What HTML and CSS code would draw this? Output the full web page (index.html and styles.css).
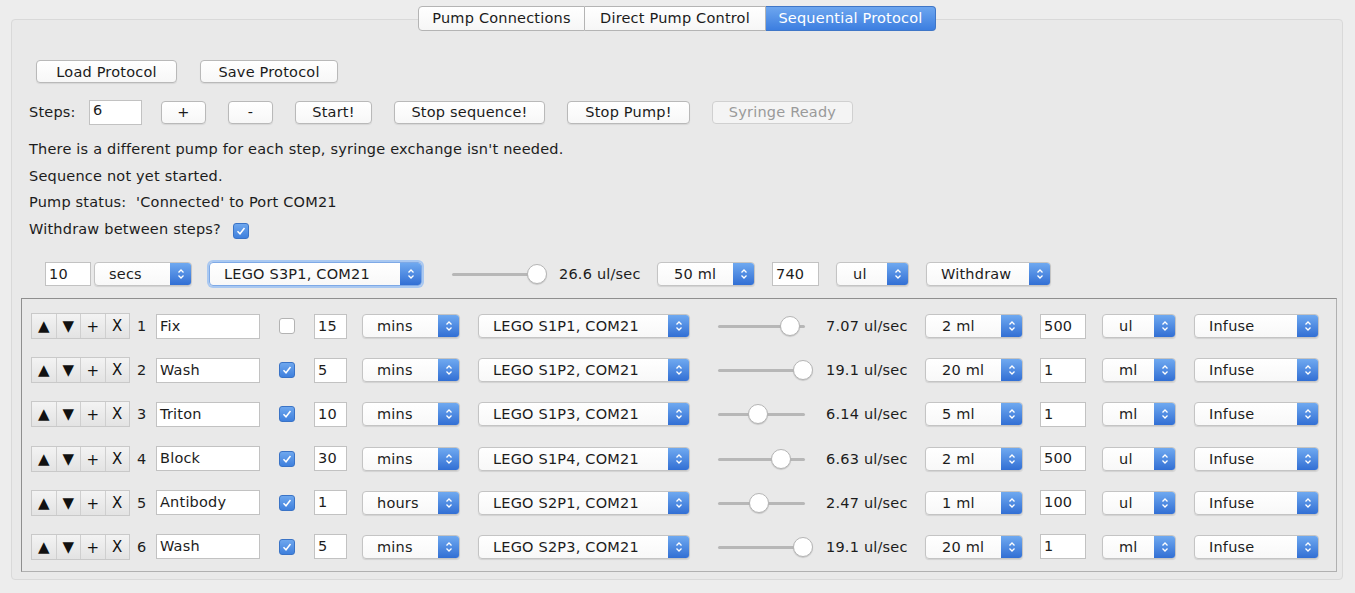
FILE: index.html
```html
<!DOCTYPE html>
<html>
<head>
<meta charset="utf-8">
<link rel="stylesheet" href="styles.css">
</head>
<body>
<div class="window">
  <div class="tabbar">
    <div class="tab first">Pump Connections</div>
    <div class="tab">Direct Pump Control</div>
    <div class="tab active last">Sequential Protocol</div>
  </div>
  <div class="panel">
    <div class="row load-row">
      <button class="btn w-load">Load Protocol</button>
      <button class="btn w-save">Save Protocol</button>
    </div>
    <div class="row steps-row">
      <span class="lbl steps-lbl">Steps:</span>
      <div class="field steps-field">6</div>
      <button class="btn w-pm">+</button>
      <button class="btn w-pm">-</button>
      <button class="btn w-start">Start!</button>
      <button class="btn w-stopseq">Stop sequence!</button>
      <button class="btn w-stoppump">Stop Pump!</button>
      <button class="btn w-syr disabled">Syringe Ready</button>
    </div>
    <div class="text-line">There is a different pump for each step, syringe exchange isn't needed.</div>
    <div class="text-line">Sequence not yet started.</div>
    <div class="text-line">Pump status:&nbsp;&nbsp;'Connected' to Port COM21</div>
    <div class="text-line withdraw-line">Withdraw between steps? <span class="chk on"><svg viewBox="0 0 16 16"><path d="M4.5 8.3 L7 10.8 L11.5 5" fill="none" stroke="#fff" stroke-width="1.5"/></svg></span></div>

    <div class="row config-row">
      <div class="field w-cfg-num">10</div>
      <div class="select w-secs"><span class="sel-text">secs</span><span class="arrow"><svg viewBox="0 0 10 16"><path d="M2.5 6.5 L5 4 L7.5 6.5 M2.5 9.5 L5 12 L7.5 9.5" fill="none" stroke="#fff" stroke-width="1.3"/></svg></span></div>
      <div class="select w-cfg-pump focused"><span class="sel-text">LEGO S3P1, COM21</span><span class="arrow"><svg viewBox="0 0 10 16"><path d="M2.5 6.5 L5 4 L7.5 6.5 M2.5 9.5 L5 12 L7.5 9.5" fill="none" stroke="#fff" stroke-width="1.3"/></svg></span></div>
      <div class="slider w-cfg-slider"><span class="track"></span><span class="knob" style="left:75px"></span></div>
      <span class="rate cfg-rate">26.6 ul/sec</span>
      <div class="select w-ml"><span class="sel-text">50 ml</span><span class="arrow"><svg viewBox="0 0 10 16"><path d="M2.5 6.5 L5 4 L7.5 6.5 M2.5 9.5 L5 12 L7.5 9.5" fill="none" stroke="#fff" stroke-width="1.3"/></svg></span></div>
      <div class="field w-cfg-val">740</div>
      <div class="select w-unit"><span class="sel-text">ul</span><span class="arrow"><svg viewBox="0 0 10 16"><path d="M2.5 6.5 L5 4 L7.5 6.5 M2.5 9.5 L5 12 L7.5 9.5" fill="none" stroke="#fff" stroke-width="1.3"/></svg></span></div>
      <div class="select w-dir cfg-dir"><span class="sel-text">Withdraw</span><span class="arrow"><svg viewBox="0 0 10 16"><path d="M2.5 6.5 L5 4 L7.5 6.5 M2.5 9.5 L5 12 L7.5 9.5" fill="none" stroke="#fff" stroke-width="1.3"/></svg></span></div>
    </div>

    <div class="table" id="table"></div>
  </div>
</div>
<script src="app.js"></script>
</body>
</html>
```

FILE: app.js
```js
var rows = [
  [1, "Fix", false, "15", "mins", "LEGO S1P1, COM21", 62, "7.07 ul/sec", "2 ml", "500", "ul", "Infuse"],
  [2, "Wash", true, "5", "mins", "LEGO S1P2, COM21", 75, "19.1 ul/sec", "20 ml", "1", "ml", "Infuse"],
  [3, "Triton", true, "10", "mins", "LEGO S1P3, COM21", 30, "6.14 ul/sec", "5 ml", "1", "ml", "Infuse"],
  [4, "Block", true, "30", "mins", "LEGO S1P4, COM21", 53, "6.63 ul/sec", "2 ml", "500", "ul", "Infuse"],
  [5, "Antibody", true, "1", "hours", "LEGO S2P1, COM21", 31, "2.47 ul/sec", "1 ml", "100", "ul", "Infuse"],
  [6, "Wash", true, "5", "mins", "LEGO S2P3, COM21", 75, "19.1 ul/sec", "20 ml", "1", "ml", "Infuse"]
];
var arrow = '<span class="arrow"><svg viewBox="0 0 10 16"><path d="M2.5 6.5 L5 4 L7.5 6.5 M2.5 9.5 L5 12 L7.5 9.5" fill="none" stroke="#fff" stroke-width="1.3"/></svg></span>';
function sel(cls, t) { return '<div class="select ' + cls + '"><span class="sel-text">' + t + '</span>' + arrow + '</div>'; }
var check = '<svg viewBox="0 0 16 16"><path d="M4.5 8.3 L7 10.8 L11.5 5" fill="none" stroke="#fff" stroke-width="1.5"/></svg>';
var html = "";
rows.forEach(function (r) {
  html += '<div class="trow">' +
    '<div class="seg"><span class="sb">\u25B2</span><span class="sb">\u25BC</span><span class="sb plus">+</span><span class="sb">X</span></div>' +
    '<span class="num">' + r[0] + '</span>' +
    '<div class="field w-name">' + r[1] + '</div>' +
    '<span class="chk ' + (r[2] ? 'on' : 'off') + '">' + (r[2] ? check : '') + '</span>' +
    '<div class="field w-tnum">' + r[3] + '</div>' +
    sel('w-time', r[4]) +
    sel('w-pump', r[5]) +
    '<div class="slider w-tslider"><span class="track"></span><span class="knob" style="left:' + r[6] + 'px"></span></div>' +
    '<span class="rate">' + r[7] + '</span>' +
    sel('w-ml', r[8]) +
    '<div class="field w-tval">' + r[9] + '</div>' +
    sel('w-unit t-unit', r[10]) +
    sel('w-dir', r[11]) +
    '</div>';
});
document.getElementById('table').innerHTML = html;
```

FILE: styles.css
```css
html, body {
  margin: 0;
  padding: 0;
}
body {
  background: #ededed;
  font-family: "DejaVu Sans", Verdana, sans-serif;
  font-size: 14.5px;
  letter-spacing: 0.2px;
  color: #1c1c1c;
  width: 1355px;
  height: 593px;
  overflow: hidden;
}
.window {
  padding-top: 6px;
}
.tabbar {
  display: flex;
  justify-content: center;
  position: relative;
  z-index: 2;
  height: 25px;
  margin-left: -1px;
}
.tab {
  height: 23px;
  line-height: 23px;
  padding: 0;
  text-align: center;
  background: linear-gradient(#ffffff, #f6f6f6);
  border: 1px solid #b4b4b4;
  border-left: none;
  font-size: 14.5px;
  color: #1b1b1b;
  white-space: nowrap;
}
.tab.first {
  border-left: 1px solid #b4b4b4;
  border-radius: 4px 0 0 4px;
  width: 165px;
}
.tab:nth-child(2) { width: 180px; }
.tab.active {
  background: linear-gradient(#6da6ef, #3c7ee0);
  color: #fff;
  border-color: #3f76c7;
  width: 169px;
}
.tab.last { border-radius: 0 4px 4px 0; }
.panel {
  margin: -12px 12px 0 11px;
  height: 561px;
  box-sizing: border-box;
  background: #e9e9e9;
  border: 1px solid #d9d9d9;
  border-radius: 4px;
  padding-top: 40px;
}
.row {
  display: flex;
  align-items: center;
}
.btn {
  font-family: inherit;
  font-size: 14.5px;
  letter-spacing: 0.2px;
  color: #1b1b1b;
  height: 23px;
  box-sizing: border-box;
  padding: 0;
  background: linear-gradient(#ffffff, #f7f7f7);
  border: 1px solid #b9b9b9;
  border-radius: 4px;
  box-shadow: 0 1px 1px rgba(0,0,0,0.08);
  text-align: center;
  white-space: nowrap;
}
.btn.disabled {
  color: #9a9a9a;
  background: #f4f4f4;
  border-color: #d0d0d0;
  box-shadow: none;
}
.load-row {
  padding-left: 24px;
  gap: 23px;
}
.w-load { width: 141px; }
.w-save { width: 138px; }
.steps-row {
  margin-top: 16px;
  padding-left: 17px;
  height: 26px;
}
.steps-lbl { margin-right: 15px; width: 45px; }
.field {
  background: #fff;
  border: 1px solid #c2c2c2;
  box-sizing: border-box;
  height: 25px;
  line-height: 23px;
  padding-left: 3px;
  white-space: nowrap;
  overflow: hidden;
}
.steps-field {
  width: 53px;
  line-height: 18px;
  margin-right: 19px;
}
.steps-row .btn { margin-right: 22px; }
.w-pm { width: 45px; }
.w-start { width: 77px; }
.w-stopseq { width: 151px; }
.w-stoppump { width: 123px; }
.w-syr { width: 141px; }
.text-line {
  padding-left: 17px;
  height: 26.5px;
  line-height: 26px;
  display: flex;
  align-items: center;
}
.steps-row + .text-line { margin-top: 11px; }
.withdraw-line .chk { margin-left: 12px; margin-top: 5px; }
.chk {
  width: 16px;
  height: 16px;
  box-sizing: border-box;
  border-radius: 3px;
  display: inline-block;
  flex: none;
}
.chk svg { width: 16px; height: 16px; display: block; }
.chk.on {
  background: linear-gradient(#6ea7ee, #3f80dd);
  border: 1px solid #3a73c6;
}
.chk.on svg { margin: -1px; }
.chk.off {
  background: #fff;
  border: 1px solid #b3b3b3;
}
.config-row {
  margin-top: 19px;
  padding-left: 33px;
  height: 25px;
}
.w-cfg-num { width: 46px; height: 24px; margin-right: 3px; }
.select {
  display: flex;
  height: 24px;
  box-sizing: border-box;
  background: linear-gradient(#ffffff, #f8f8f8);
  border: 1px solid #c4c4c4;
  border-radius: 4px;
  box-shadow: 0 1px 1px rgba(0,0,0,0.1);
  overflow: hidden;
  flex: none;
}
.sel-text {
  flex: 1;
  padding-left: 14px;
  line-height: 22px;
  white-space: nowrap;
}
.arrow {
  width: 21px;
  background: linear-gradient(#6fa9f0, #326fd4);
  display: flex;
  align-items: center;
  justify-content: center;
}
.arrow svg { width: 10px; height: 16px; }
.w-secs { width: 98px; margin-right: 17px; }
.w-secs .sel-text { padding-left: 14px; }
.w-cfg-pump { width: 213px; margin-right: 30px; }
.focused {
  border-color: #7ea9e6;
  box-shadow: 0 0 0 2px #a9c8f1;
}
.slider {
  position: relative;
  height: 24px;
  flex: none;
}
.track {
  position: absolute;
  left: 0;
  right: 0;
  top: 11px;
  height: 3px;
  background: #b7b7b7;
  border-radius: 2px;
}
.knob {
  position: absolute;
  top: 2px;
  width: 20px;
  height: 20px;
  box-sizing: border-box;
  border-radius: 50%;
  background: #fff;
  border: 1px solid #b5b5b5;
  box-shadow: 0 1px 1px rgba(0,0,0,0.15);
}
.w-cfg-slider { width: 93px; margin-right: 14px; }
.rate { white-space: nowrap; }
.cfg-rate { width: 98px; }
.w-ml { width: 98px; }
.w-ml .sel-text { padding-left: 16px; }
.config-row .w-ml { margin-right: 17px; }
.w-cfg-val { width: 47px; height: 24px; margin-right: 17px; }
.w-unit { width: 73px; }
.w-unit .sel-text { padding-left: 16px; }
.config-row .w-unit { margin-right: 17px; }
.w-dir { width: 125px; }
.w-dir .sel-text { padding-left: 14px; }

.table {
  margin: 12px 0 0 9px;
  width: 1316px;
  height: 274px;
  box-sizing: border-box;
  border: 1px solid #8f8f8f;
  border-right-color: #b0b0b0;
  border-bottom-color: #b0b0b0;
  padding: 14px 0 0 9px;
  display: flex;
  flex-direction: column;
  gap: 19.2px;
}
.trow {
  display: grid;
  grid-template-columns: 106px 19px 123px 35px 48px 116px 240px 108px 99px 115px 62px 92px 125px;
  align-items: center;
  height: 25px;
}
.seg {
  display: flex;
  width: 99px;
  height: 26px;
  box-sizing: border-box;
  border: 1px solid #c9c9c9;
  background: linear-gradient(#f3f3f3, #e3e3e3);
}
.sb {
  flex: 1;
  text-align: center;
  line-height: 25px;
  font-size: 15px;
  letter-spacing: 0;
  border-right: 1px solid #cfcfcf;
  color: #111;
}
.sb:last-child { border-right: none; }
.sb.plus { line-height: 27px; }
.w-name { width: 104px; }
.w-tnum { width: 33px; }
.w-time { width: 98px; }
.w-time .sel-text { padding-left: 14px; }
.w-pump { width: 212px; }
.w-tslider { width: 87px; }
.w-tval { width: 46px; }
.t-unit { width: 74px; }
```
